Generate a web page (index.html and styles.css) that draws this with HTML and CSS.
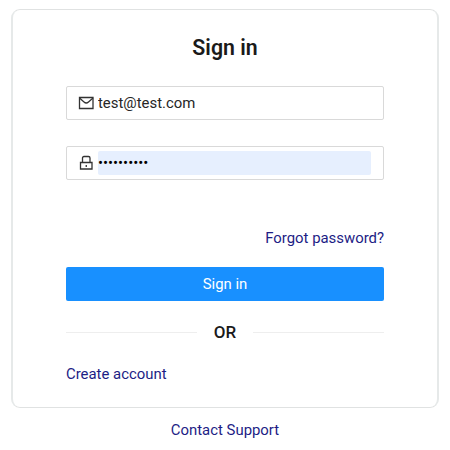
FILE: index.html
```html
<!DOCTYPE html>
<html lang="en">
<head>
    <meta charset="UTF-8">
    <title>Sign in</title>
    <link rel="stylesheet" href="styles.css">
</head>
<body>
    <div class="card">
        <h1>Sign in</h1>
        <form>
            <label class="field">
                <svg class="icon" viewBox="0 0 16 16"><path d="M1.500 2.500h13.500v11H1.500z"/><path d="M1.500 3l4.500 4q2.200 2 4.500 0L15 3"/></svg>
                <input type="email" value="test@test.com">
            </label>
            <label class="field">
                <svg class="icon" viewBox="0 0 16 16"><path d="M2.500 7.500h11.500v6.500h-11.500zM4.500 7.500V3q0-1.500 1.500-1.500h4.500q1.500 0 1.500 1.500v4.500M8.250 10v2"/></svg>
                <input class="filled" type="password" value="testpasswd">
            </label>
            <a class="forgot" href="#">Forgot password?</a>
            <button type="button">Sign in</button>
        </form>
        <div class="divider">OR</div>
        <a class="create" href="#">Create account</a>
    </div>
    <a class="support" href="#">Contact Support</a>
</body>
</html>
```
FILE: styles.css
```css
* { box-sizing: border-box; }
body { margin: 0; padding: 9px 11px 0; font-family: Roboto, sans-serif; font-size: 14.9px; background: #fff; color: #262626; display: flex; flex-direction: column; align-items: center; }
.card { width: 428px; height: 399px; padding: 24px 53px 0; border: 1px solid #e0e2e2; border-width: 1px 2px; border-color: #e0e2e2 #e6e9e9; border-radius: 9px; display: flex; flex-direction: column; }
h1 { margin: 0; font-size: 21.3px; line-height: 28px; font-weight: 600; text-align: center; color: #1a1a1a; }
form { display: flex; flex-direction: column; }
.field { display: flex; align-items: center; height: 34px; margin-top: 26px; padding: 0 12px 0 11px; border: 1px solid #d9d9d9; border-radius: 2px; }
h1 + form .field:first-child { margin-top: 24px; }
.icon { width: 16px; height: 16px; margin-right: 4px; fill: none; stroke: #333; stroke-width: 1.3; }
input { flex: 1; min-width: 0; height: 24px; padding: 0; border: 0; outline: 0; font: inherit; color: inherit; background: #fff; }
.filled { background: #e6effe; border-radius: 2px; color: #000; }
a { color: #1d1d85; text-decoration: none; line-height: 20px; }
.forgot { align-self: flex-end; margin-top: 48px; }
button { height: 34px; margin-top: 19px; border: 0; border-radius: 2px; background: #1890ff; color: #fff; font: inherit; }
.divider { display: flex; align-items: center; gap: 17px; margin-top: 20px; font-size: 17px; font-weight: 500; line-height: 22px; color: #1a1a1a; }
.divider::before, .divider::after { content: ""; flex: 1; height: 1px; background: #eee; }
.create { align-self: flex-start; margin-top: 21px; }
.support { margin-top: 12px; }
```
